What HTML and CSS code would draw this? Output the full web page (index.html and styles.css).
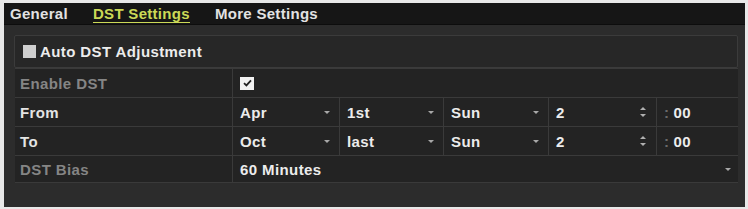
FILE: index.html
```html
<!DOCTYPE html>
<html lang="en">
<head>
    <meta charset="UTF-8">
    <title>DST Settings</title>
    <link rel="stylesheet" href="styles.css">
</head>
<body>
    <div class="panel">
        <!-- Tabs -->
        <div class="tabs">
            <span class="tab">General</span>
            <span class="tab active">DST Settings</span>
            <span class="tab">More Settings</span>
        </div>

        <div class="content">
            <div class="group">
                <span class="box"></span>
                <span>Auto DST Adjustment</span>
            </div>

            <div class="grid">
                <div class="cell label dim">Enable DST</div>
                <div class="cell wide">
                    <span class="box checked">
                        <svg width="9" height="8" viewBox="0 0 9 8"><path d="M1 4.2 L3.4 6.4 L8 1.4" fill="none" stroke="#222" stroke-width="1.8"/></svg>
                    </span>
                </div>

                <div class="cell label">From</div>
                <div class="cell select">Apr<i class="arrow"></i></div>
                <div class="cell select">1st<i class="arrow"></i></div>
                <div class="cell select">Sun<i class="arrow"></i></div>
                <div class="cell select">2<i class="spin"></i></div>
                <div class="cell"><span class="colon">:</span>00</div>

                <div class="cell label">To</div>
                <div class="cell select">Oct<i class="arrow"></i></div>
                <div class="cell select">last<i class="arrow"></i></div>
                <div class="cell select">Sun<i class="arrow"></i></div>
                <div class="cell select">2<i class="spin"></i></div>
                <div class="cell"><span class="colon">:</span>00</div>

                <div class="cell label dim">DST Bias</div>
                <div class="cell wide select bias">60 Minutes<i class="arrow"></i></div>
            </div>
        </div>
    </div>
</body>
</html>
```

FILE: styles.css
```css
body {
    margin: 0;
    background-color: #e8e8e8;
    font-family: "Liberation Sans", Arial, sans-serif;
    font-size: 15px;
    font-weight: bold;
    letter-spacing: 0.4px;
}

.panel {
    margin: 3px 3px 0 4px;
    height: 204px;
    background-color: #2c2c2c;
    box-shadow: 0 2px 0 #e8e8e8;
}

.tabs {
    display: flex;
    align-items: center;
    gap: 25px;
    height: 21px;
    padding-left: 6px;
    background-color: #161616;
    border-bottom: 1px solid #0d0d0d;
}

.tab {
    color: #e2e2e2;
    line-height: 17px;
    letter-spacing: 0.3px;
}

.tab.active {
    color: #cbd957;
    border-bottom: 1px solid #cbd957;
}

.content {
    padding: 10px 7px 0 10px;
}

.group {
    display: flex;
    align-items: center;
    gap: 4px;
    height: 31px;
    padding-left: 8px;
    background-color: #272727;
    border: 1px solid #3b3b3b;
    border-radius: 2px;
    color: #ececec;
}

.box {
    display: inline-flex;
    align-items: center;
    justify-content: center;
    width: 13px;
    height: 13px;
    background-color: #cfcfcf;
}

.box.checked {
    width: 14px;
    background-color: #f2f2f2;
}

.grid {
    display: grid;
    grid-template-columns: 217px 106px 103px 104px 107px 81px;
    grid-template-rows: 28px 28px 28px 26px;
    gap: 1px;
    width: 723px;
    margin-left: 1px;
    background-color: #3a3a3a;
    border-top: 1px solid #3a3a3a;
    border-bottom: 1px solid #3a3a3a;
}

.cell {
    display: flex;
    align-items: center;
    padding: 0 7px;
    background-color: #232323;
    color: #ececec;
}

.label {
    padding-left: 5px;
    color: #e4e4e4;
}

.dim {
    color: #858585;
}

.wide {
    grid-column: span 5;
}

.select {
    justify-content: space-between;
}

.arrow {
    width: 0;
    height: 0;
    margin-right: 2px;
    border-left: 3px solid transparent;
    border-right: 3px solid transparent;
    border-top: 3px solid #a8a8a8;
}

.bias .arrow {
    margin-right: 0;
}

.spin {
    position: relative;
    width: 6px;
    height: 10px;
    margin-right: 3px;
}

.spin::before,
.spin::after {
    content: '';
    position: absolute;
    left: 0;
    border-left: 3px solid transparent;
    border-right: 3px solid transparent;
}

.spin::before {
    top: 0;
    border-bottom: 3px solid #b0b0b0;
}

.spin::after {
    bottom: 0;
    border-top: 3px solid #b0b0b0;
}

.colon {
    margin-right: 4px;
    color: #6a6a6a;
}
```
